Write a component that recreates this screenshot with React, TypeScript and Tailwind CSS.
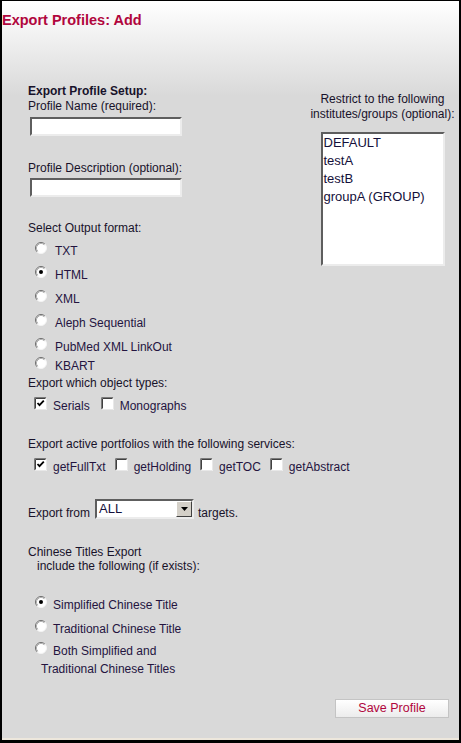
import React from "react";

type MarkProps = {
  checked?: boolean;
};

function Radio({ checked }: MarkProps) {
  return (
    <svg width="12" height="12" viewBox="0 0 12 12" className="shrink-0 mb-[7px]">
      <circle cx="6" cy="6" r="5.5" fill="#ffffff" />
      <path d="M2.11 9.89 A5.5 5.5 0 0 1 9.89 2.11" fill="none" stroke="#6b6b6b" strokeWidth="1" />
      <path d="M9.89 2.11 A5.5 5.5 0 0 1 2.11 9.89" fill="none" stroke="#f4f4f4" strokeWidth="1" />
      <path d="M2.82 9.18 A4.5 4.5 0 0 1 9.18 2.82" fill="none" stroke="#b0b0b0" strokeWidth="1" />
      {checked && <circle cx="6" cy="6" r="2" fill="#000000" />}
    </svg>
  );
}

function Checkbox({ checked }: MarkProps) {
  return (
    <svg width="13" height="13" viewBox="0 0 13 13" className="shrink-0 mb-[5px]">
      <rect x="0" y="0" width="13" height="13" fill="#ffffff" />
      <path d="M0.5 12.5 V0.5 H12.5" fill="none" stroke="#7a7a7a" />
      <path d="M1.5 11.5 V1.5 H11.5" fill="none" stroke="#404040" />
      <path d="M0.5 12.5 H12.5 V0.5" fill="none" stroke="#e8e8e8" />
      {checked && (
        <path d="M3.5 6 L5.5 8.2 L9.8 3.6" fill="none" stroke="#000000" strokeWidth="1.8" />
      )}
    </svg>
  );
}

const inputBox =
  "bg-white border-2 border-t-[#5e5e5e] border-l-[#5e5e5e] border-r-[#ececec] border-b-[#ececec]";

function OptionRow({ label, checked, tall = true }: { label: string; checked?: boolean; tall?: boolean }) {
  return (
    <div className={`flex items-center ${tall ? "h-[24px]" : "h-[14px]"}`}>
      <div className="ml-[7px]">
        <Radio checked={checked} />
      </div>
      <span className="ml-[8px] text-[#24143f]">{label}</span>
    </div>
  );
}

export default function App() {
  return (
    <div className="w-[461px] h-[743px] flex flex-col border-t border-l-2 border-r-2 border-b-[3px] border-black bg-[linear-gradient(to_bottom,#ffffff_0px,#f1f1f1_35px,#d9d9d9_95px,#d9d9d9_100%)] font-['Liberation_Sans',Arial,sans-serif] text-[12px] text-[#18122a]">
      <h1 className="mt-[11px] text-[14.5px] leading-[17px] font-bold text-[#b1063d]">
        Export Profiles: Add
      </h1>

      <div className="flex mt-[55px]">
        {/* left column */}
        <div className="flex-1 min-w-0 pl-[26px] flex flex-col items-start leading-[15px] whitespace-nowrap">
          <p className="font-bold">Export Profile Setup:</p>
          <p>Profile Name (required):</p>
          <div className={`mt-[3px] ml-[2px] w-[152px] h-[19px] ${inputBox}`} />

          <p className="mt-[25px]">Profile Description (optional):</p>
          <div className={`mt-[2px] ml-[2px] w-[152px] h-[19px] ${inputBox}`} />

          <p className="mt-[24px]">Select Output format:</p>
          <div className="mt-[3px] flex flex-col">
            <OptionRow label="TXT" />
            <OptionRow label="HTML" checked />
            <OptionRow label="XML" />
            <OptionRow label="Aleph Sequential" />
            <OptionRow label="PubMed XML LinkOut" />
            <OptionRow label="KBART" tall={false} />
          </div>

          <p className="mt-[3px]">Export which object types:</p>
          <div className="mt-[4px] h-[22px] flex items-center text-[#24143f]">
            <div className="ml-[6px]"><Checkbox checked /></div>
            <span className="ml-[6px]">Serials</span>
            <div className="ml-[11px]"><Checkbox /></div>
            <span className="ml-[6px]">Monographs</span>
          </div>

          <p className="mt-[20px]">Export active portfolios with the following services:</p>
          <div className="mt-[4px] h-[22px] flex items-center text-[#24143f]">
            <div className="ml-[6px]"><Checkbox checked /></div>
            <span className="ml-[6px]">getFullTxt</span>
            <div className="ml-[9px]"><Checkbox /></div>
            <span className="ml-[6px]">getHolding</span>
            <div className="ml-[9px]"><Checkbox /></div>
            <span className="ml-[6px]">getTOC</span>
            <div className="ml-[9px]"><Checkbox /></div>
            <span className="ml-[6px]">getAbstract</span>
          </div>

          <div className="mt-[21px] flex items-start">
            <span className="mt-[7px]">Export from</span>
            <div className={`ml-[5px] w-[99px] h-[20px] flex items-center ${inputBox}`}>
              <span className="pl-[2px] text-[13px] leading-[16px] text-[#14103a]">ALL</span>
              <div className="ml-auto w-[16px] h-[16px] bg-[#d4d0c8] border border-t-white border-l-white border-r-[#404040] border-b-[#404040] flex items-center justify-center">
                <svg width="7" height="4" viewBox="0 0 7 4">
                  <path d="M0 0 H7 L3.5 4 Z" fill="#000000" />
                </svg>
              </div>
            </div>
            <span className="mt-[7px] ml-[4px]">targets.</span>
          </div>

          <p className="mt-[24px] leading-[14px]">Chinese Titles Export</p>
          <p className="pl-[9px] leading-[14px]">include the following (if exists):</p>

          <div className="mt-[20px] flex flex-col text-[#24143f]">
            <div className="flex items-center h-[24px]">
              <div className="ml-[7px]"><Radio checked /></div>
              <span className="ml-[6px]">Simplified Chinese Title</span>
            </div>
            <div className="flex items-center h-[24px]">
              <div className="ml-[7px]"><Radio /></div>
              <span className="ml-[6px]">Traditional Chinese Title</span>
            </div>
            <div className="flex items-center h-[21px]">
              <div className="ml-[7px]"><Radio /></div>
              <span className="ml-[6px]">Both Simplified and</span>
            </div>
            <p className="pl-[13px] leading-[14px]">Traditional Chinese Titles</p>
          </div>
        </div>

        {/* right column */}
        <div className="w-[153px] shrink-0 pt-[8px] flex flex-col items-center">
          <p className="leading-[15px] text-center whitespace-nowrap">
            Restrict to the following
            <br />
            institutes/groups (optional):
          </p>
          <div className={`mt-[10px] w-[124px] h-[134px] pl-[1px] text-[13px] leading-[18px] text-[#14103a] ${inputBox}`}>
            <div>DEFAULT</div>
            <div>testA</div>
            <div>testB</div>
            <div>groupA (GROUP)</div>
          </div>
        </div>
      </div>

      <div className="mt-[23px] pr-[10px] flex justify-end">
        <button className="w-[114px] h-[19px] border border-[#c4c4c4] bg-[linear-gradient(to_bottom,#ffffff,#ececec)] text-[12.5px] leading-[17px] text-[#b1063d]">
          Save Profile
        </button>
      </div>

      <div className="mt-auto h-[2px] bg-[#ede7dc]" />
    </div>
  );
}
